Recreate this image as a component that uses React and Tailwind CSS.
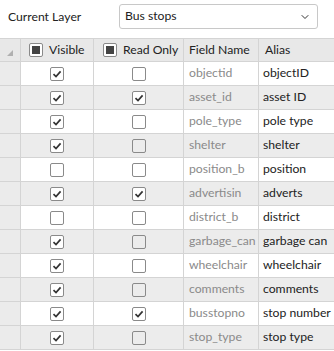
import { ChevronDown } from 'lucide-react';

const fields = [
  { name: 'objectid', alias: 'objectID', visible: true, readOnly: false },
  { name: 'asset_id', alias: 'asset ID', visible: true, readOnly: true },
  { name: 'pole_type', alias: 'pole type', visible: true, readOnly: false },
  { name: 'shelter', alias: 'shelter', visible: true, readOnly: false },
  { name: 'position_b', alias: 'position', visible: false, readOnly: false },
  { name: 'advertisin', alias: 'adverts', visible: true, readOnly: true },
  { name: 'district_b', alias: 'district', visible: false, readOnly: false },
  { name: 'garbage_can', alias: 'garbage can', visible: true, readOnly: false },
  { name: 'wheelchair', alias: 'wheelchair', visible: true, readOnly: false },
  { name: 'comments', alias: 'comments', visible: true, readOnly: false },
  { name: 'busstopno', alias: 'stop number', visible: true, readOnly: true },
  { name: 'stop_type', alias: 'stop type', visible: true, readOnly: false },
];

const Check = ({ checked }) => (
  <span
    className={`flex h-[14px] w-[14px] items-center justify-center rounded-[2px] border border-[#8a8a8a] ${
      checked ? 'bg-white' : 'bg-transparent'
    }`}
  >
    {checked && (
      <svg width="10" height="10" viewBox="0 0 10 10">
        <path d="M1.5 5.2 L4 7.6 L8.6 2.4" fill="none" stroke="#333" strokeWidth="1.7" />
      </svg>
    )}
  </span>
);

const HeaderCheck = () => (
  <span className="flex h-[14px] w-[14px] items-center justify-center rounded-[2px] border border-[#8a8a8a] bg-white">
    <span className="h-[8px] w-[8px] bg-[#444]" />
  </span>
);

const App = () => {
  return (
    <div className="h-[351px] w-[334px] overflow-hidden bg-white font-['Lato',sans-serif] text-[12.2px] text-[#222]">
      <div className="flex h-[38px] items-start pt-[4px]">
        <span className="ml-[8px] mt-[4px] w-[111px]">Current Layer</span>
        <div className="flex h-[25px] w-[199px] items-center justify-between rounded-[3px] border border-[#c8c8c8] bg-white pl-[5px] pr-[6px]">
          <span>Bus stops</span>
          <ChevronDown size={12} strokeWidth={2} className="text-[#333]" />
        </div>
      </div>

      <div className="flex h-[24px] border-y border-[#d4d4d4] bg-[#e8e8e8]">
        <div className="flex w-[21px] items-end justify-center border-r border-[#d4d4d4] pb-[5px]">
          <svg width="6" height="6" viewBox="0 0 6 6">
            <path d="M6 0 L6 6 L0 6 Z" fill="#b0b0b0" />
          </svg>
        </div>
        <div className="flex w-[73px] items-center gap-[6px] border-r border-[#d4d4d4] pl-[8px]">
          <HeaderCheck />
          <span>Visible</span>
        </div>
        <div className="flex w-[90px] items-center gap-[6px] border-r border-[#d4d4d4] pl-[9px]">
          <HeaderCheck />
          <span>Read Only</span>
        </div>
        <div className="flex w-[75px] items-center border-r border-[#d4d4d4] pl-[5px]">Field Name</div>
        <div className="flex w-[75px] items-center pl-[6px]">Alias</div>
      </div>

      {fields.map((f, i) => {
        const shaded = i % 2 === 1;
        const bg = shaded ? 'bg-[#ececec]' : 'bg-white';
        return (
          <div key={f.name} className={`flex h-[24px] border-b border-[#d4d4d4] ${bg}`}>
            <div className="w-[21px] border-r border-[#d4d4d4] bg-[#ebebeb]" />
            <div className="flex w-[73px] items-center justify-center border-r border-[#d4d4d4]">
              <Check checked={f.visible} />
            </div>
            <div className="flex w-[90px] items-center justify-center border-r border-[#d4d4d4]">
              <Check checked={f.readOnly} />
            </div>
            <div className="flex w-[75px] items-center whitespace-nowrap border-r border-[#d4d4d4] pl-[5px] text-[#8a8a8a]">
              {f.name}
            </div>
            <div className="flex w-[75px] items-center whitespace-nowrap pl-[4px]">{f.alias}</div>
          </div>
        );
      })}
    </div>
  );
};

export default App;
